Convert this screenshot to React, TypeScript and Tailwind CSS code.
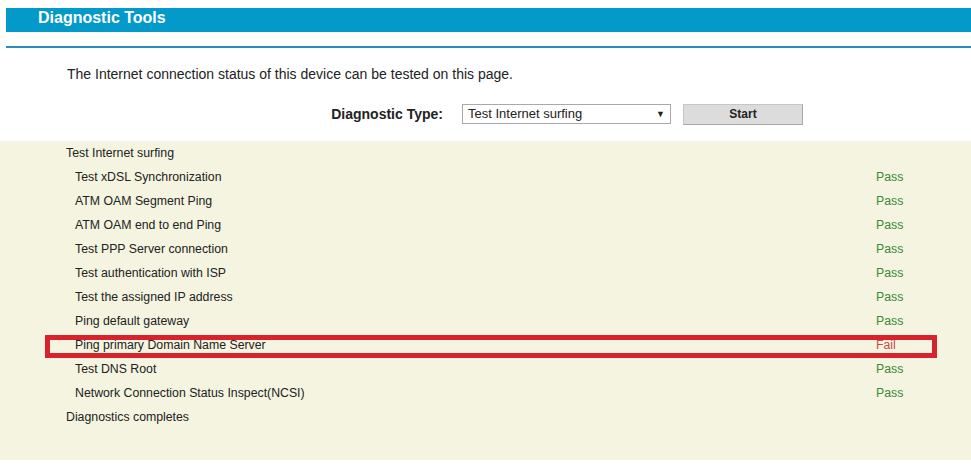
import React from "react";

const rows: { label: string; status: "Pass" | "Fail" }[] = [
  { label: "Test xDSL Synchronization", status: "Pass" },
  { label: "ATM OAM Segment Ping", status: "Pass" },
  { label: "ATM OAM end to end Ping", status: "Pass" },
  { label: "Test PPP Server connection", status: "Pass" },
  { label: "Test authentication with ISP", status: "Pass" },
  { label: "Test the assigned IP address", status: "Pass" },
  { label: "Ping default gateway", status: "Pass" },
  { label: "Ping primary Domain Name Server", status: "Fail" },
  { label: "Test DNS Root", status: "Pass" },
  { label: "Network Connection Status Inspect(NCSI)", status: "Pass" },
];

export default function App() {
  return (
    <div
      className="w-[971px] h-[466px] bg-white overflow-hidden text-[#222]"
      style={{ fontFamily: '"Liberation Sans", Arial, sans-serif' }}
    >
      <div className="ml-[6px] mt-[8px] h-[24px] bg-[#0399c9] flex items-center pl-[32px] pb-[4px]">
        <span className="text-white font-bold text-[16px] leading-none">Diagnostic Tools</span>
      </div>
      <div className="ml-[6px] mt-[14px] h-[2px] bg-[#2b8db8]" />
      <div className="pl-[67px] mt-[18px] text-[14px] leading-[16px] text-[#222]">
        The Internet connection status of this device can be tested on this page.
      </div>
      <div className="mt-[21px] flex items-center h-[22px]">
        <div className="w-[443px] text-right font-bold text-[14px]">Diagnostic Type:</div>
        <div className="ml-[19px] w-[209px] h-[20px] border border-[#a9a9a9] bg-white flex items-center justify-between pl-[5px] pr-[5px] text-[13px]">
          <span>Test Internet surfing</span>
          <span className="text-[9px] leading-none">▼</span>
        </div>
        <div className="ml-[12px] w-[120px] h-[21px] bg-[#dcdcdc] border border-[#c6c6c6] border-b-[#a8a8a8] border-r-[#a8a8a8] flex items-center justify-center font-bold text-[12px]">
          Start
        </div>
      </div>
      <div className="mt-[16px] h-[319px] bg-[#f4f4e0] text-[12.3px]">
        <div className="h-[24px] flex items-center pl-[66px]">Test Internet surfing</div>
        {rows.map((r) => (
          <div key={r.label} className="relative h-[24px] flex items-center pl-[75px]">
            <span className="flex-1">{r.label}</span>
            <span
              className={
                "w-[95px] " + (r.status === "Pass" ? "text-[#3b8a34]" : "text-[#c94a4a]")
              }
            >
              {r.status}
            </span>
            {r.status === "Fail" && (
              <div className="absolute left-[45px] right-[34px] top-[2px] bottom-[-1px] border-[5px] border-[#d9232c]" />
            )}
          </div>
        ))}
        <div className="h-[24px] flex items-center pl-[66px]">Diagnostics completes</div>
      </div>
    </div>
  );
}
